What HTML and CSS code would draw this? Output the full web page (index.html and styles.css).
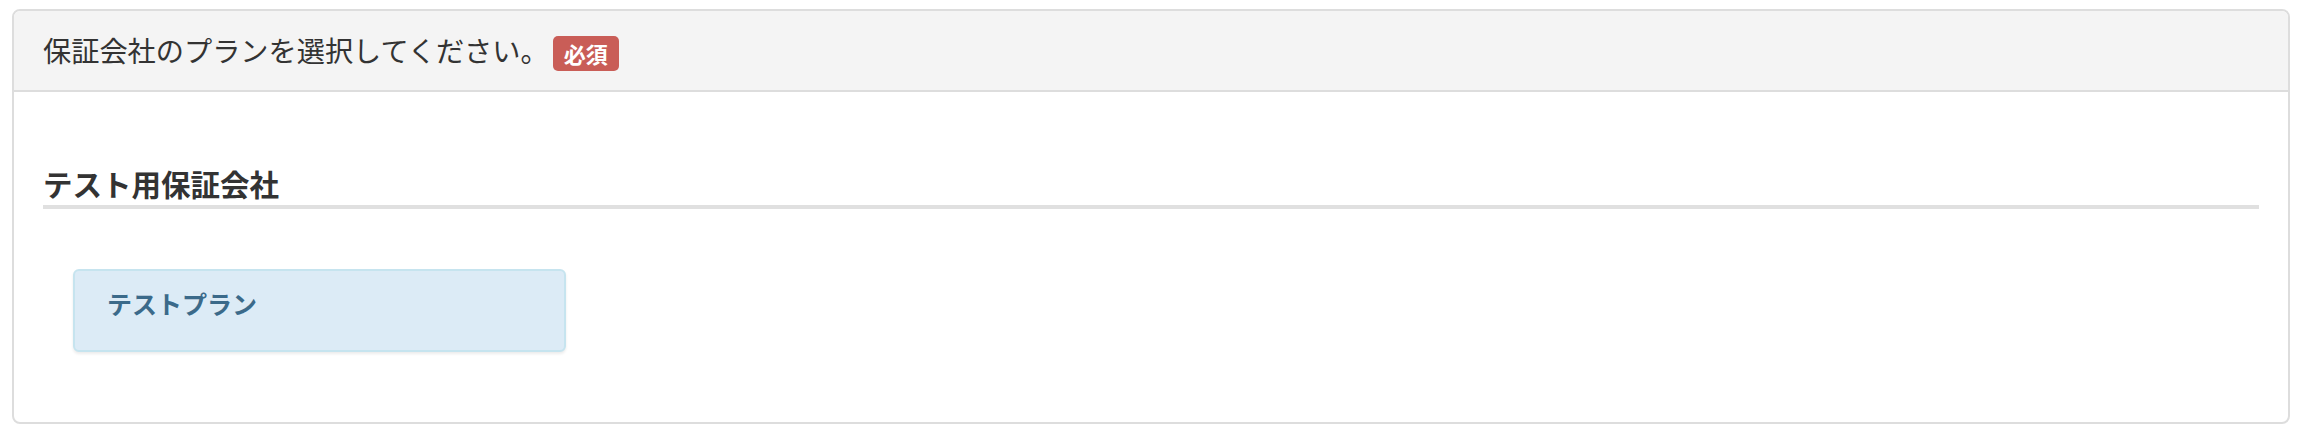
FILE: index.html
```html
<!DOCTYPE html>
<html lang="ja">
<head>
    <meta charset="UTF-8">
    <meta name="viewport" content="width=device-width, initial-scale=1.0">
    <title>保証会社プラン選択</title>
    <link rel="stylesheet" href="styles.css">
</head>
<body>
    <div class="panel">
        <div class="panel-heading">
            <span class="panel-title">保証会社のプランを選択してください。</span>
            <span class="label-required">必須</span>
        </div>
        <div class="panel-body">
            <h3 class="company-name">テスト用保証会社</h3>
            <div class="plan-list">
                <div class="plan-card">テストプラン</div>
            </div>
        </div>
    </div>
</body>
</html>
```

FILE: styles.css
```css
body {
    margin: 0;
    padding: 9px 17px 0 12px;
    font-family: "Noto Sans CJK JP", "Noto Sans", sans-serif;
    color: #333;
    background-color: #fff;
}

.panel {
    border: 2px solid #ddd;
    border-radius: 8px;
    background-color: #fff;
}

.panel-heading {
    display: flex;
    align-items: center;
    gap: 4px;
    height: 79px;
    padding: 0 29px;
    background-color: #f4f4f4;
    border-bottom: 2px solid #ddd;
    border-radius: 6px 6px 0 0;
}

.panel-title {
    font-size: 28.2px;
    line-height: 1;
}

.label-required {
    display: inline-block;
    margin-top: 6px;
    height: 35px;
    padding: 0 11px;
    font-size: 22px;
    font-weight: bold;
    line-height: 35px;
    color: #fff;
    background-color: #c95d57;
    border-radius: 5px;
}

.panel-body {
    padding: 75px 29px 70px;
}

.company-name {
    margin: 0;
    padding-bottom: 5px;
    font-size: 29.5px;
    font-weight: bold;
    line-height: 33px;
    border-bottom: 4px solid #e0e0e0;
}

.plan-list {
    display: flex;
    margin-top: 60px;
    padding-left: 30px;
}

.plan-card {
    box-sizing: border-box;
    width: 493px;
    height: 83px;
    padding: 14px 32px;
    font-size: 25px;
    font-weight: bold;
    line-height: 36px;
    color: #3b6a8a;
    background-color: #dcebf6;
    border: 2px solid #c6e4ef;
    border-radius: 6px;
    box-shadow: 0 2px 3px rgba(0, 0, 0, 0.08);
}
```
